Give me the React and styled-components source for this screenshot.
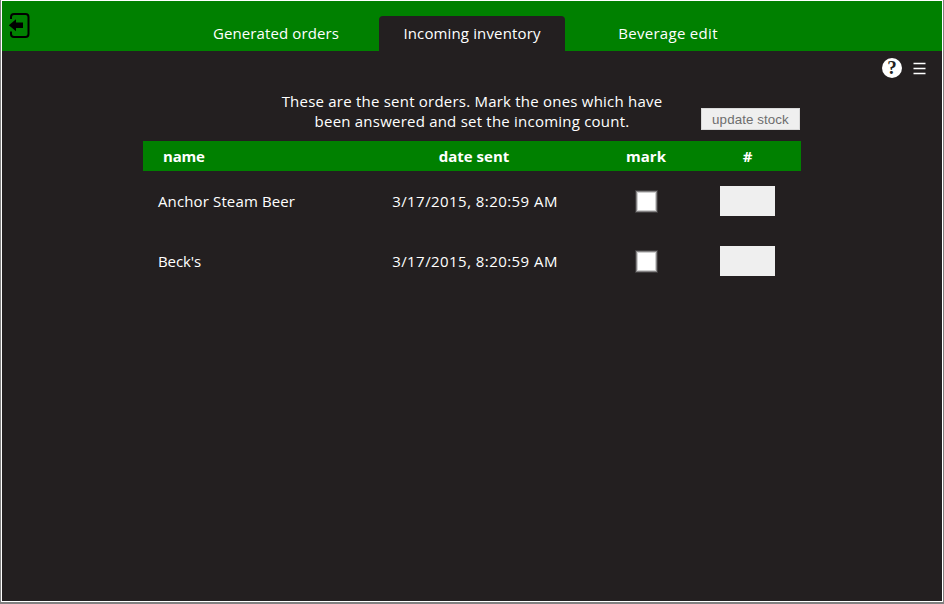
import React from 'react';
import styled, { createGlobalStyle } from 'styled-components';

const GlobalStyle = createGlobalStyle`
  * { box-sizing: border-box; }
  body { margin: 0; overflow: hidden; background: #808080; }
`;

const Frame = styled.div`
  width: 942px;
  height: 602px;
  margin-left: 1px;
  border: 1px solid #fff;
  background: #231f20;
  color: #fff;
  font: 15px/20px 'Open Sans', 'Trebuchet MS', sans-serif;
`;

const Header = styled.header`
  display: grid;
  grid-template-columns: 181px 578px 181px;
  height: 50px;
  background: #008000;
`;

const LogoutButton = styled.button`
  width: 24px;
  height: 28px;
  margin: 11px 0 0 6px;
  padding: 0;
  border: 0;
  background: none;
  color: #000;
  svg { display: block; }
`;

const Tabs = styled.nav`
  display: flex;
  gap: 10px;
  align-items: flex-end;
`;

const Tab = styled.a`
  flex: 0 0 186px;
  height: 35px;
  line-height: 34px;
  text-align: center;
  border-radius: 4px 4px 0 0;
  background: ${(p) => (p.$active ? '#231f20' : 'transparent')};
  letter-spacing: ${(p) => p.$spacing}px;
`;

const Tools = styled.div`
  display: flex;
  justify-content: flex-end;
  height: 34px;
  padding: 7px 16px 0 0;
  gap: 11px;
  svg { display: block; }
`;

const Content = styled.main`
  width: 658px;
  margin-left: 141px;
`;

const Intro = styled.div`
  display: flex;
  justify-content: space-between;
  height: 56px;
  padding: 6px 1px 0 129px;
`;

const Message = styled.p`
  width: 400px;
  margin: 0;
  text-align: center;
  letter-spacing: 0.22px;
`;

const UpdateButton = styled.button`
  width: 99px;
  height: 22px;
  margin-top: 17px;
  padding: 1px 0 0;
  border: 1px solid #d9d9d9;
  background: #efefef;
  color: #6d6d6d;
  font: 13.33px/19px 'Liberation Sans', Arial, sans-serif;
  letter-spacing: 0.1px;
`;

const Row = styled.div`
  display: grid;
  grid-template-columns: 207px 248px 96px 107px;
  align-items: center;
  justify-items: center;
  height: 60px;
`;

const HeadRow = styled(Row)`
  height: 30px;
  background: #008000;
  font-weight: 700;
`;

const Name = styled.span`
  justify-self: start;
  padding-left: ${(p) => p.$indent}px;
  letter-spacing: ${(p) => p.$spacing || 0}px;
`;

const DateSent = styled.span`
  padding-left: 2px;
  letter-spacing: 0.44px;
`;

const Mark = styled.input.attrs({ type: 'checkbox' })`
  appearance: none;
  width: 23px;
  height: 23px;
  margin: 0 0 0 1px;
  border: 1px solid #3f3c3d;
  background: #fff;
  box-shadow: inset 0 0 0 1px #858384, inset 0 0 0 2px #cfcfcf;
`;

const Count = styled.input`
  width: 55px;
  height: 30px;
  padding: 0;
  border: 0;
  background: #efefef;
`;

const HelpGlyph = styled.text`
  font: bold 19px 'Liberation Serif', serif;
  fill: #231f20;
  text-anchor: middle;
`;

const orders = [
  { name: 'Anchor Steam Beer', spacing: 0.13, date: '3/17/2015, 8:20:59 AM' },
  { name: "Beck's", spacing: -0.1, date: '3/17/2015, 8:20:59 AM' },
];

export default function App() {
  return (
    <>
      <GlobalStyle />
      <Frame>
        <Header>
          <LogoutButton aria-label="Log out">
            <svg width="24" height="28" viewBox="0 0 24 28">
              <path d="M3 7V5Q3 2 6 2H17.5Q20.5 2 20.5 5V22Q20.5 25 17.5 25H6Q3 25 3 22V19.5" fill="none" stroke="currentColor" strokeWidth="2" />
              <path d="M0.8 13.3L8 7.3V10.6H15V16H8V19.3Z" fill="currentColor" />
            </svg>
          </LogoutButton>
          <Tabs>
            <Tab $spacing={0.12}>Generated orders</Tab>
            <Tab $active $spacing={0.14}>Incoming inventory</Tab>
            <Tab $spacing={0.3}>Beverage edit</Tab>
          </Tabs>
        </Header>
        <Tools>
          <svg width="20" height="20" viewBox="0 0 20 20" aria-label="Help">
            <circle cx="10" cy="10" r="10" fill="#fff" />
            <HelpGlyph x="10" y="16">?</HelpGlyph>
          </svg>
          <svg width="13" height="20" viewBox="0 0 13 20" aria-label="Menu">
            <path d="M0.5 5.5H12.5M0.5 10.5H12.5M0.5 15.5H12.5" stroke="#fff" strokeWidth="1.4" />
          </svg>
        </Tools>
        <Content>
          <Intro>
            <Message>
              These are the sent orders. Mark the ones which have been answered and set the incoming count.
            </Message>
            <UpdateButton disabled>update stock</UpdateButton>
          </Intro>
          <HeadRow>
            <Name $indent={20} $spacing={-0.2}>name</Name>
            <span>date sent</span>
            <span>mark</span>
            <span>#</span>
          </HeadRow>
          {orders.map((o) => (
            <Row key={o.name}>
              <Name $indent={15} $spacing={o.spacing}>{o.name}</Name>
              <DateSent>{o.date}</DateSent>
              <Mark aria-label="Mark order" />
              <Count aria-label="Incoming count" />
            </Row>
          ))}
        </Content>
      </Frame>
    </>
  );
}
